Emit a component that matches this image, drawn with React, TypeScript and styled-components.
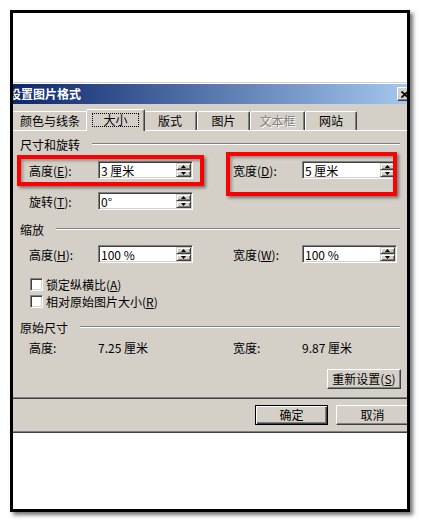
import React from "react";
import styled, { createGlobalStyle, css } from "styled-components";

const FONT = `"Noto Sans CJK SC", "Noto Sans", "DejaVu Sans", sans-serif`;

const GlobalStyle = createGlobalStyle`
  html, body { margin: 0; padding: 0; background: #ffffff; }
  body { font-family: ${FONT}; font-size: 12px; color: #000; }
  * { box-sizing: border-box; }
`;

const Page = styled.div`
  width: 421px;
  height: 523px;
  padding: 10px 0 0 10px;
`;

const Frame = styled.div`
  position: relative;
  width: 400px;
  height: 502px;
  border: 3px solid #000;
  background: #fff;
  box-shadow: 3px 3px 4px rgba(0, 0, 0, 0.55);
  overflow: hidden;
  padding-top: 69px;
`;

const Dialog = styled.div`
  width: 412px;
  margin-left: -8px;
  background: #d4d0c8;
  border: 1px solid;
  border-color: #d4d0c8 #404040 #404040 #d4d0c8;
  box-shadow: inset 1px 1px 0 #fff, inset -1px -1px 0 #808080;
  padding: 1px;
`;

const TitleBar = styled.div`
  height: 20px;
  display: flex;
  align-items: center;
  justify-content: space-between;
  padding: 0 2px;
  background: linear-gradient(to right, #0a246a, #a6caf0);
  color: #fff;
  font-weight: bold;
  font-size: 12px;
  line-height: 20px;
  white-space: nowrap;
`;

const CloseButton = styled.div`
  width: 16px;
  height: 14px;
  background: #d4d0c8;
  border: 1px solid;
  border-color: #fff #404040 #404040 #fff;
  box-shadow: inset -1px -1px 0 #808080;
  display: flex;
  align-items: center;
  justify-content: center;
`;

const Body = styled.div`
  padding: 5px 6px 6px 4px;
`;

const TabStrip = styled.div`
  display: flex;
  align-items: flex-end;
  height: 21px;
  padding-left: 1px;
`;

const Tab = styled.div<{ $w: number; $selected?: boolean; $disabled?: boolean }>`
  width: ${(p) => p.$w}px;
  height: 19px;
  flex: none;
  display: flex;
  align-items: center;
  justify-content: center;
  border: 1px solid;
  border-bottom: none;
  border-color: #fff #404040 transparent #fff;
  box-shadow: inset -1px 0 0 #808080;
  border-radius: 2px 2px 0 0;
  background: #d4d0c8;
  line-height: 12px;
  white-space: nowrap;
  color: ${(p) => (p.$disabled ? "#808080" : "#000")};
  text-shadow: ${(p) => (p.$disabled ? "1px 1px 0 #fff" : "none")};
  ${(p) =>
    p.$selected &&
    css`
      width: ${p.$w + 4}px;
      height: 22px;
      margin: 0 -2px -1px;
      position: relative;
      z-index: 1;
      padding-bottom: 1px;
    `}
`;

const FocusRing = styled.span`
  border: 1px dotted #000;
  padding: 0 10px;
  line-height: 12px;
`;

const Panel = styled.div`
  border: 1px solid;
  border-color: #fff #404040 #404040 #fff;
  box-shadow: inset -1px -1px 0 #808080;
  padding: 6px 7px 9px 8px;
  display: flex;
  flex-direction: column;
`;

const Section = styled.div<{ $mt: number }>`
  display: flex;
  align-items: center;
  gap: 12px;
  height: 14px;
  margin-top: ${(p) => p.$mt}px;
  padding-right: 1px;
  white-space: nowrap;
  &::after {
    content: "";
    flex: 1;
    border-top: 1px solid #808080;
    border-bottom: 1px solid #fff;
  }
`;

const FieldRow = styled.div<{ $mt: number; $h?: number }>`
  display: grid;
  grid-template-columns: 69px 95px 40px 69px 95px;
  align-items: center;
  height: ${(p) => p.$h ?? 18}px;
  margin-top: ${(p) => p.$mt}px;
  margin-left: 9px;
`;

const Label = styled.span<{ $col?: number }>`
  white-space: nowrap;
  padding-top: 2px;
  line-height: 14px;
  ${(p) => p.$col && css`grid-column: ${p.$col};`}
`;

const Key = styled.span`
  text-decoration: underline;
`;

const SpinField = styled.div`
  display: flex;
  height: 18px;
  width: 95px;
  background: #fff;
  border: 1px solid;
  border-color: #808080 #fff #fff #808080;
  box-shadow: inset 1px 1px 0 #404040, inset -1px -1px 0 #d4d0c8;
  padding: 1px;
`;

const FieldText = styled.div`
  flex: 1;
  padding-left: 1px;
  line-height: 15px;
  white-space: pre;
`;

const Spinner = styled.div`
  width: 15px;
  display: flex;
  flex-direction: column;
`;

const SpinButton = styled.div`
  flex: 1;
  background: #d4d0c8;
  border: 1px solid;
  border-color: #d4d0c8 #404040 #404040 #d4d0c8;
  box-shadow: inset 1px 1px 0 #fff, inset -1px -1px 0 #808080;
  display: flex;
  align-items: center;
  justify-content: center;
`;

const CheckRow = styled.div<{ $mt: number }>`
  display: flex;
  align-items: center;
  gap: 3px;
  height: 13px;
  margin-left: 10px;
  margin-top: ${(p) => p.$mt}px;
  white-space: nowrap;
  line-height: 13px;
`;

const CheckBox = styled.span`
  width: 13px;
  height: 13px;
  flex: none;
  background: #fff;
  border: 1px solid;
  border-color: #808080 #fff #fff #808080;
  box-shadow: inset 1px 1px 0 #404040, inset -1px -1px 0 #d4d0c8;
`;

const Value = styled.span<{ $col?: number }>`
  white-space: pre;
  line-height: 14px;
  ${(p) => p.$col && css`grid-column: ${p.$col};`}
`;

const PanelActions = styled.div`
  display: flex;
  justify-content: flex-end;
  margin-top: 14px;
`;

const DialogActions = styled.div`
  display: flex;
  justify-content: flex-end;
  gap: 8px;
  margin-top: 6px;
`;

const Button = styled.div<{ $w: number; $default?: boolean }>`
  width: ${(p) => p.$w}px;
  height: 20px;
  flex: none;
  display: flex;
  align-items: center;
  justify-content: center;
  background: #d4d0c8;
  border: 1px solid;
  border-color: #fff #404040 #404040 #fff;
  box-shadow: inset -1px -1px 0 #808080;
  white-space: nowrap;
  line-height: 14px;
  ${(p) =>
    p.$default &&
    css`
      border-color: #000;
      box-shadow: inset 1px 1px 0 #fff, inset -1px -1px 0 #404040,
        inset -2px -2px 0 #808080;
    `}
`;

const Highlight = styled.div<{ $x: number; $y: number; $w: number; $h: number }>`
  position: absolute;
  left: ${(p) => p.$x}px;
  top: ${(p) => p.$y}px;
  width: ${(p) => p.$w}px;
  height: ${(p) => p.$h}px;
  border: 4px solid #ff0000;
  box-shadow: 2px 2px 3px rgba(0, 0, 0, 0.45), inset 2px 2px 3px rgba(0, 0, 0, 0.3);
  pointer-events: none;
`;

const Arrow = ({ up }: { up?: boolean }) => (
  <svg width="5" height="3" viewBox="0 0 5 3">
    <polygon points={up ? "2.5,0 5,3 0,3" : "0,0 5,0 2.5,3"} fill="#000" />
  </svg>
);

const CloseGlyph = () => (
  <svg width="8" height="7" viewBox="0 0 8 7">
    <path d="M0.5 0.5 L7 6.5 M7 0.5 L0.5 6.5" stroke="#000" strokeWidth="1.8" />
  </svg>
);

const Spin = ({ text }: { text: string }) => (
  <SpinField>
    <FieldText>{text}</FieldText>
    <Spinner>
      <SpinButton>
        <Arrow up />
      </SpinButton>
      <SpinButton>
        <Arrow />
      </SpinButton>
    </Spinner>
  </SpinField>
);

const tabs = [
  { label: "颜色与线条", w: 76 },
  { label: "大小", w: 55, selected: true },
  { label: "版式", w: 54 },
  { label: "图片", w: 53 },
  { label: "文本框", w: 55, disabled: true },
  { label: "网站", w: 52 },
];

export default function App() {
  return (
    <>
      <GlobalStyle />
      <Page>
        <Frame>
          <Dialog>
            <TitleBar>
              <span>设置图片格式</span>
              <CloseButton>
                <CloseGlyph />
              </CloseButton>
            </TitleBar>
            <Body>
              <TabStrip>
                {tabs.map((t) => (
                  <Tab key={t.label} $w={t.w} $selected={t.selected} $disabled={t.disabled}>
                    {t.selected ? <FocusRing>{t.label}</FocusRing> : t.label}
                  </Tab>
                ))}
              </TabStrip>
              <Panel>
                <Section $mt={0}>尺寸和旋转</Section>
                <FieldRow $mt={10}>
                  <Label>
                    高度(<Key>E</Key>):
                  </Label>
                  <Spin text="3 厘米" />
                  <Label $col={4}>
                    宽度(<Key>D</Key>):
                  </Label>
                  <Spin text="5 厘米" />
                </FieldRow>
                <FieldRow $mt={13}>
                  <Label>
                    旋转(<Key>T</Key>):
                  </Label>
                  <Spin text="0°" />
                </FieldRow>
                <Section $mt={12}>缩放</Section>
                <FieldRow $mt={9}>
                  <Label>
                    高度(<Key>H</Key>):
                  </Label>
                  <Spin text="100 %" />
                  <Label $col={4}>
                    宽度(<Key>W</Key>):
                  </Label>
                  <Spin text="100 %" />
                </FieldRow>
                <CheckRow $mt={15}>
                  <CheckBox />
                  <span>
                    锁定纵横比(<Key>A</Key>)
                  </span>
                </CheckRow>
                <CheckRow $mt={4}>
                  <CheckBox />
                  <span>
                    相对原始图片大小(<Key>R</Key>)
                  </span>
                </CheckRow>
                <Section $mt={12}>原始尺寸</Section>
                <FieldRow $mt={7} $h={14}>
                  <Value>高度:</Value>
                  <Value>7.25 厘米</Value>
                  <Value $col={4}>宽度:</Value>
                  <Value>9.87 厘米</Value>
                </FieldRow>
                <PanelActions>
                  <Button $w={74}>
                    重新设置(<Key>S</Key>)
                  </Button>
                </PanelActions>
              </Panel>
              <DialogActions>
                <Button $w={73} $default>
                  确定
                </Button>
                <Button $w={73}>取消</Button>
              </DialogActions>
            </Body>
          </Dialog>
          <Highlight $x={4} $y={142} $w={187} $h={31} />
          <Highlight $x={213} $y={139} $w={171} $h={44} />
        </Frame>
      </Page>
    </>
  );
}
